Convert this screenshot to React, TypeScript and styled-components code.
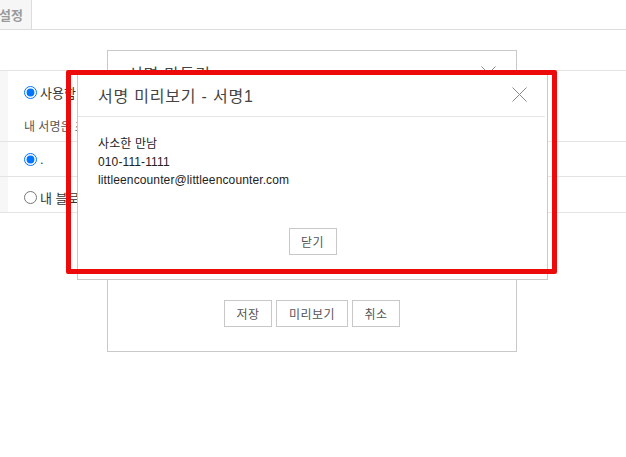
import styled, { createGlobalStyle } from "styled-components";

const GlobalStyle = createGlobalStyle`
  html, body {
    margin: 0;
    padding: 0;
    background: #fff;
  }
  body {
    font-family: "Liberation Sans", "Noto Sans CJK KR", sans-serif;
    color: #333;
  }
`;

const Page = styled.div`
  position: relative;
  width: 626px;
  height: 457px;
  overflow: hidden;
`;

const TabBar = styled.div`
  display: flex;
  height: 29px;
  border-bottom: 1px solid #dcdcdc;
`;

const Tab = styled.div`
  width: 31px;
  height: 29px;
  background: #f6f6f6;
  border-right: 1px solid #dcdcdc;
  display: flex;
  align-items: center;
  font-size: 13px;
  font-weight: bold;
  color: #9a9a9a;
  overflow: hidden;

  span {
    margin-left: -1px;
    white-space: nowrap;
  }
`;

const SettingTable = styled.div`
  margin-top: 40px;
  border-top: 1px solid #e4e4e4;
`;

const SettingRow = styled.div<{ $height: number }>`
  display: grid;
  grid-template-columns: 8px 1fr;
  height: ${(p) => p.$height}px;
  border-bottom: 1px solid #e4e4e4;
`;

const RowHead = styled.div`
  background: #f7f7f7;
`;

const RowBody = styled.div<{ $top: number }>`
  padding: ${(p) => p.$top}px 0 0 16px;
  display: flex;
  flex-direction: column;
  gap: 15px;
`;

const RadioLabel = styled.label`
  display: flex;
  align-items: center;
  gap: 3px;
  font-size: 13px;
  color: #333;
  white-space: nowrap;

  input {
    margin: 0;
    width: 13px;
    height: 13px;
  }
`;

const Note = styled.div`
  font-size: 12px;
  color: #555;
  white-space: nowrap;
`;

const Dialog = styled.div<{ $left: number; $top: number; $width: number; $height: number }>`
  position: absolute;
  left: ${(p) => p.$left}px;
  top: ${(p) => p.$top}px;
  width: ${(p) => p.$width}px;
  height: ${(p) => p.$height}px;
  box-sizing: border-box;
  background: #fff;
  border: 1px solid #c9c9c9;
  display: flex;
  flex-direction: column;
`;

const DialogHeader = styled.div<{ $height: number }>`
  height: ${(p) => p.$height}px;
  margin: 0 2px 0 0;
  display: flex;
  align-items: center;
  justify-content: space-between;
  padding: 0 18px 0 20px;
  border-bottom: 1px solid #e6e6e6;
  flex-shrink: 0;
`;

const DialogTitle = styled.div`
  font-size: 16px;
  color: #444;
  letter-spacing: 0.8px;
  white-space: nowrap;
`;

const CloseButton = styled.button`
  border: none;
  background: transparent;
  padding: 0;
  width: 15px;
  height: 15px;
  display: flex;
  cursor: pointer;
`;

const DialogBody = styled.div`
  flex: 1;
  padding: 18px 20px 0;
  font-size: 12px;
  line-height: 18px;
  letter-spacing: 0.12px;
  color: #222;
`;

const DialogFooter = styled.div<{ $bottom: number }>`
  display: flex;
  justify-content: center;
  gap: 4px;
  padding-bottom: ${(p) => p.$bottom}px;
`;

const Button = styled.button<{ $width: number }>`
  width: ${(p) => p.$width}px;
  height: 27px;
  border: 1px solid #c8c8c8;
  background: #fff;
  color: #555;
  font-family: "Liberation Sans", "Noto Sans CJK KR", sans-serif;
  font-size: 12px;
  letter-spacing: 0.5px;
  padding: 0;
  cursor: pointer;
`;

const Highlight = styled.div`
  position: absolute;
  left: 66px;
  top: 70px;
  width: 491px;
  height: 204px;
  box-sizing: border-box;
  border: 5px solid #ec0a0a;
  border-radius: 2px;
  pointer-events: none;
`;

function CloseIcon() {
  return (
    <svg width="15" height="15" viewBox="0 0 15 15">
      <path d="M0.5 0.5 L14.5 14.5 M14.5 0.5 L0.5 14.5" stroke="#8a8a8a" strokeWidth="1" fill="none" />
    </svg>
  );
}

export default function App() {
  return (
    <>
      <GlobalStyle />
      <Page>
        <TabBar>
          <Tab>
            <span>설정</span>
          </Tab>
        </TabBar>
        <SettingTable>
          <SettingRow $height={70}>
            <RowHead />
            <RowBody $top={12}>
              <RadioLabel>
                <input type="radio" name="use" defaultChecked /> 사용함
              </RadioLabel>
              <Note>내 서명은 초안 메일에 자동으로 들어갑니다.</Note>
            </RowBody>
          </SettingRow>
          <SettingRow $height={34}>
            <RowHead />
            <RowBody $top={10}>
              <RadioLabel>
                <input type="radio" name="sign" defaultChecked /> .
              </RadioLabel>
            </RowBody>
          </SettingRow>
          <SettingRow $height={35}>
            <RowHead />
            <RowBody $top={11}>
              <RadioLabel>
                <input type="radio" name="sign" /> 내 블로그 서명
              </RadioLabel>
            </RowBody>
          </SettingRow>
        </SettingTable>

        <Dialog $left={107} $top={50} $width={410} $height={302}>
          <DialogHeader $height={44}>
            <DialogTitle>서명 만들기</DialogTitle>
            <CloseButton>
              <CloseIcon />
            </CloseButton>
          </DialogHeader>
          <DialogBody />
          <DialogFooter $bottom={24}>
            <Button $width={48}>저장</Button>
            <Button $width={72}>미리보기</Button>
            <Button $width={48}>취소</Button>
          </DialogFooter>
        </Dialog>

        <Dialog $left={77} $top={72} $width={471} $height={208}>
          <DialogHeader $height={43}>
            <DialogTitle>서명 미리보기 - 서명1</DialogTitle>
            <CloseButton>
              <CloseIcon />
            </CloseButton>
          </DialogHeader>
          <DialogBody>
            <div>사소한 만남</div>
            <div>010-111-1111</div>
            <div>littleencounter@littleencounter.com</div>
          </DialogBody>
          <DialogFooter $bottom={24}>
            <Button $width={48}>닫기</Button>
          </DialogFooter>
        </Dialog>

        <Highlight />
      </Page>
    </>
  );
}
